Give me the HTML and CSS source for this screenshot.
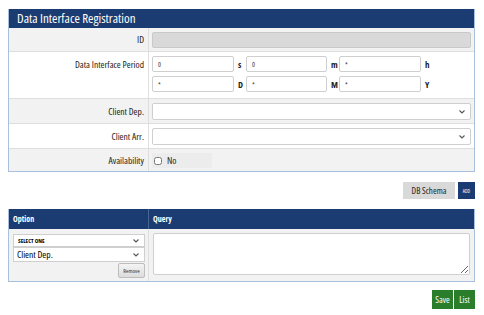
FILE: index.html
```html
<!doctype html>
<html>
<head>
<meta charset="utf-8">
<title>Data Interface Registration</title>
<link rel="stylesheet" href="styles.css">
</head>
<body>
	<div class="panel">
		<div class="panel-title">Data Interface Registration</div>

		<div class="row odd">
			<div class="label">ID</div>
			<div class="field"><input type="text" class="input-id" disabled></div>
		</div>

		<div class="row">
			<div class="label label-top">Data Interface Period</div>
			<div class="field">
				<div class="period">
					<input type="text" class="input-period" value="0"><span class="unit">s</span>
					<input type="text" class="input-period" value="0"><span class="unit">m</span>
					<input type="text" class="input-period" value="*"><span class="unit">h</span>
					<input type="text" class="input-period" value="*"><span class="unit">D</span>
					<input type="text" class="input-period" value="*"><span class="unit">M</span>
					<input type="text" class="input-period" value="*"><span class="unit">Y</span>
				</div>
			</div>
		</div>

		<div class="row odd">
			<div class="label">Client Dep.</div>
			<div class="field"><select class="select-wide"><option></option></select></div>
		</div>

		<div class="row">
			<div class="label">Client Arr.</div>
			<div class="field"><select class="select-wide"><option></option></select></div>
		</div>

		<div class="row odd last">
			<div class="label">Availability</div>
			<div class="field">
				<label class="check"><input type="checkbox"> No</label>
			</div>
		</div>
	</div>

	<div class="toolbar">
		<button class="btn btn-gray">DB Schema</button><button class="btn btn-navy">ADD</button>
	</div>

	<div class="panel">
		<div class="row head">
			<div class="head-cell">Option</div>
			<div class="head-cell">Query</div>
		</div>
		<div class="row odd last">
			<div class="option-cell">
				<select class="select-small"><option>SELECT ONE</option></select>
				<select class="select-opt"><option>Client Dep.</option></select>
				<div class="remove-line"><button class="btn-remove">Remove</button></div>
			</div>
			<div class="query-cell">
				<textarea class="query"></textarea>
			</div>
		</div>
	</div>

	<div class="toolbar bottom">
		<button class="btn btn-green">Save</button><button class="btn btn-green">List</button>
	</div>
</body>
</html>
```

FILE: styles.css
```css
body {
	margin: 9px 9px 8px 8px;
	font-family: "Open Sans", "Liberation Sans", Arial, sans-serif;
	font-stretch: 75%;
	font-size: 9px;
	color: #333;
	background: #fff;
}

.panel {
	border: 1px solid #a9c0dc;
	border-top: none;
}

.panel-title {
	background-color: #1b3c72;
	color: #fff;
	font-size: 13px;
	height: 19px;
	line-height: 19px;
	padding-left: 8px;
}

.row {
	display: grid;
	grid-template-columns: 140px 1fr;
	border-bottom: 1px solid #dedede;
	background: #fff;
}

.row.odd {
	background-color: #f2f2f2;
}

.row.last {
	border-bottom: none;
}

.label {
	display: flex;
	align-items: center;
	justify-content: flex-end;
	padding-right: 4px;
	border-right: 1px solid #dedede;
	color: #222;
	font-size: 9.5px;
}

.label-top {
	align-items: flex-start;
	padding-top: 6px;
}

.field {
	padding: 4px 3px 3px 3px;
}

input, select, textarea, button {
	font-family: inherit;
	font-stretch: inherit;
	box-sizing: border-box;
	margin: 0;
}

.input-id {
	display: block;
	width: 100%;
	height: 16px;
	background: #d9d9d9;
	border: 1px solid #c9c9c9;
	border-radius: 2px;
}

.period {
	display: grid;
	grid-template-columns: 82px 12px 81px 12px 82px 12px;
	row-gap: 4px;
	align-items: center;
}

.input-period {
	height: 16px;
	border: 1px solid #cfcfcf;
	border-radius: 2px;
	padding: 0 5px;
	font-size: 7px;
	color: #333;
	background: #fff;
}

.unit {
	font-weight: bold;
	padding-left: 4px;
	font-size: 9px;
	color: #222;
}

.row:nth-child(3) .field {
	padding-bottom: 6px;
}

.select-wide, .select-small, .select-opt {
	appearance: none;
	-webkit-appearance: none;
	background-color: #fff;
	background-image: url("data:image/svg+xml,%3Csvg xmlns='http://www.w3.org/2000/svg' width='6' height='4'%3E%3Cpath d='M0.5 0.5 L3 3 L5.5 0.5' fill='none' stroke='%23555' stroke-width='1.1'/%3E%3C/svg%3E");
	background-repeat: no-repeat;
	background-position: right 5px center;
}

.select-wide {
	display: block;
	width: 100%;
	height: 17px;
	border: 1px solid #cfcfcf;
	border-radius: 2px;
	font-size: 9px;
}

.check {
	display: inline-flex;
	align-items: center;
	gap: 5px;
	height: 15px;
	padding: 0 2px;
	background: #ececec;
	width: 56px;
	font-size: 9.5px;
	color: #222;
}

.check input {
	width: 8px;
	height: 8px;
}

.toolbar {
	display: flex;
	justify-content: flex-end;
	margin-top: 10px;
	margin-bottom: 10px;
}

.btn {
	border: none;
	font-size: 9px;
	height: 17px;
	padding: 0 6px;
	white-space: nowrap;
	cursor: pointer;
}

.btn-gray {
	background: #d9d9d9;
	color: #222;
	width: 52px;
	margin-right: 3px;
	padding: 0;
}

.btn-navy {
	background: #1b3c72;
	color: #fff;
	font-size: 5px;
	width: 17px;
	padding: 0;
}

.toolbar.bottom {
	margin-top: 8px;
}

.btn-green {
	background: #2a7d2b;
	color: #fff;
	height: 19px;
	width: 21px;
	padding: 0;
	margin-left: 1px;
}

.row.head {
	background-color: #1b3c72;
	border-bottom: none;
	height: 20px;
}

.head-cell {
	color: #fff;
	font-weight: bold;
	font-size: 8px;
	line-height: 20px;
	padding-left: 4px;
}

.head-cell:first-child {
	border-right: 1px solid #4a6591;
}

.option-cell {
	padding: 5px 3px 3px 4px;
	border-right: 1px solid #dedede;
}

.select-small {
	display: block;
	width: 100%;
	height: 13px;
	font-size: 6px;
	font-weight: bold;
	border: 1px solid #cfcfcf;
	padding: 0 4px;
}

.select-opt {
	display: block;
	width: 100%;
	height: 15px;
	font-size: 9.5px;
	border: 1px solid #cfcfcf;
	padding: 0 3px;
}

.remove-line {
	display: flex;
	justify-content: flex-end;
	margin-top: 1px;
}

.btn-remove {
	font-size: 6px;
	height: 15px;
	width: 27px;
	padding: 0;
	border: 1px solid #bdbdbd;
	border-radius: 2px;
	background: linear-gradient(#f4f4f4, #dcdcdc);
	color: #333;
}

.query-cell {
	padding: 4px 4px 6px 4px;
}

.query {
	display: block;
	width: 100%;
	height: 42px;
	border: 1px solid #cfcfcf;
	border-radius: 2px;
	background: #fff;
}
```
